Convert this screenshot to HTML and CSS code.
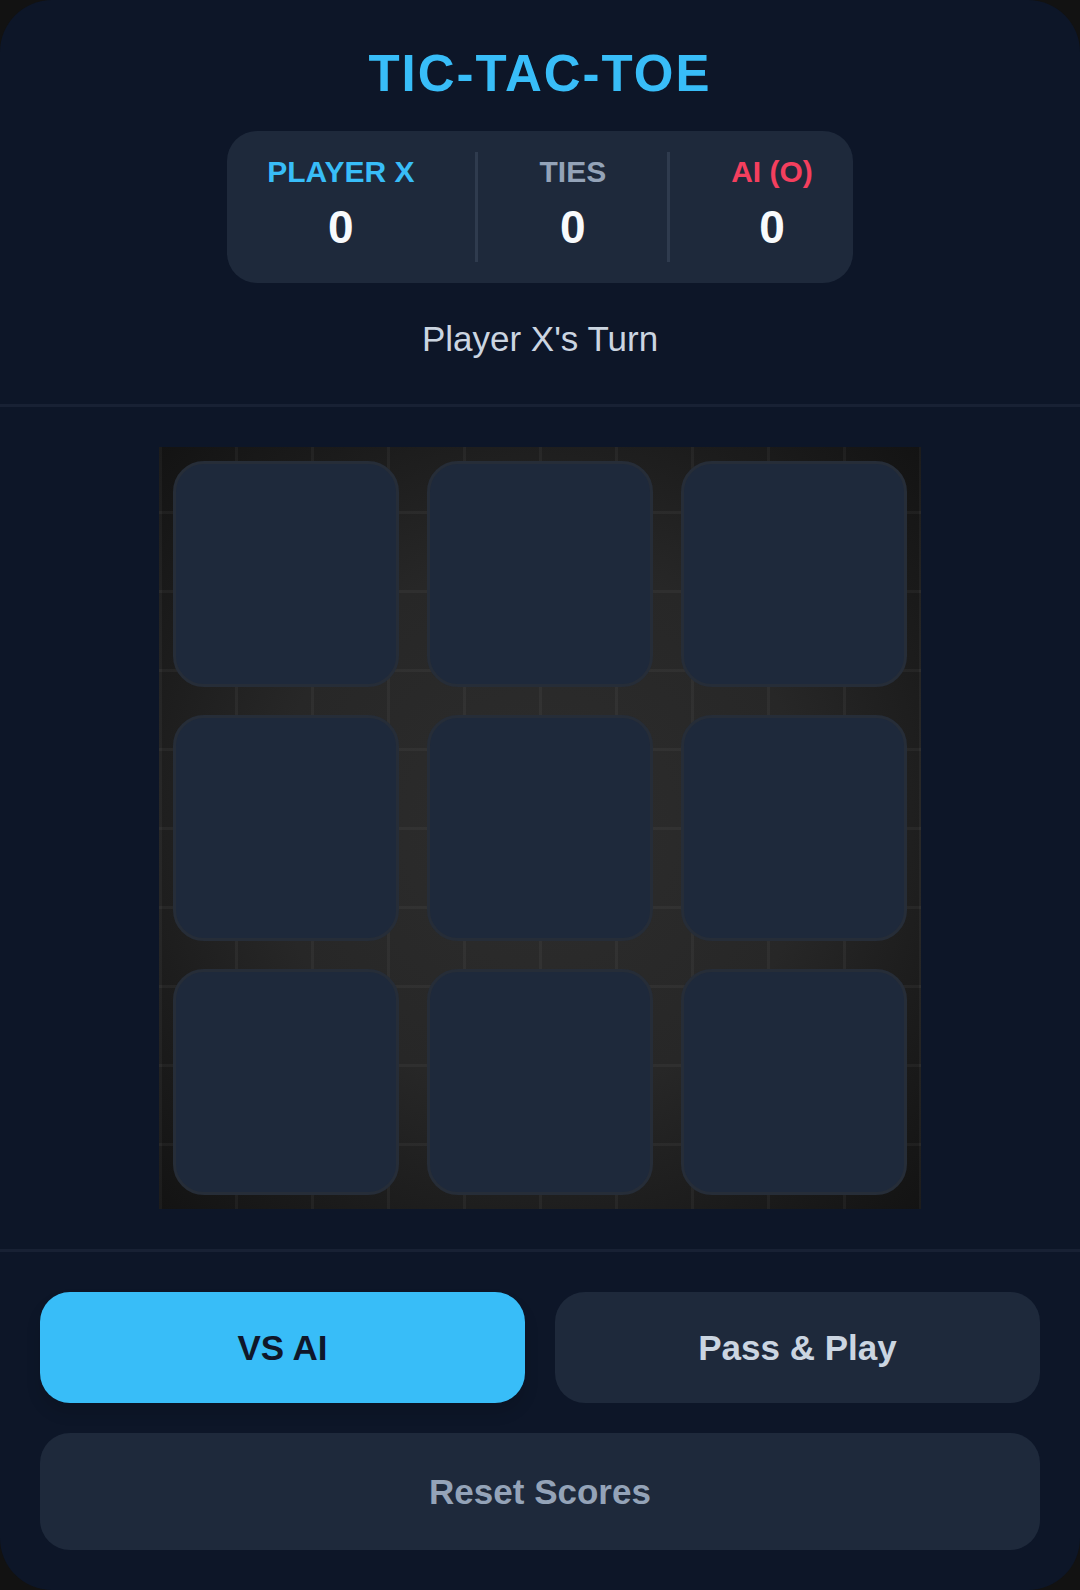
FILE: index.html
```html
<!DOCTYPE html>
<html lang="en">
<head>
  <meta charset="UTF-8">
  <meta name="viewport" content="width=device-width, initial-scale=1.0">
  <title>Tic-Tac-Toe</title>
  <link rel="stylesheet" href="styles.css">
</head>
<body>
  <div class="game">
    <header class="header">
      <h1 class="title">TIC-TAC-TOE</h1>

      <div class="scoreboard">
        <div class="score">
          <span class="score-label player-x">PLAYER X</span>
          <span class="score-value">0</span>
        </div>
        <div class="divider"></div>
        <div class="score">
          <span class="score-label ties">TIES</span>
          <span class="score-value">0</span>
        </div>
        <div class="divider"></div>
        <div class="score">
          <span class="score-label player-o">AI (O)</span>
          <span class="score-value">0</span>
        </div>
      </div>

      <p class="status">Player X's Turn</p>
    </header>

    <main class="main">
      <div class="board">
        <button type="button" class="cell" aria-label="Cell 1"></button>
        <button type="button" class="cell" aria-label="Cell 2"></button>
        <button type="button" class="cell" aria-label="Cell 3"></button>
        <button type="button" class="cell" aria-label="Cell 4"></button>
        <button type="button" class="cell" aria-label="Cell 5"></button>
        <button type="button" class="cell" aria-label="Cell 6"></button>
        <button type="button" class="cell" aria-label="Cell 7"></button>
        <button type="button" class="cell" aria-label="Cell 8"></button>
        <button type="button" class="cell" aria-label="Cell 9"></button>
      </div>
    </main>

    <footer class="controls">
      <div class="modes">
        <button type="button" class="btn active">VS AI</button>
        <button type="button" class="btn">Pass &amp; Play</button>
      </div>
      <button type="button" class="btn reset">Reset Scores</button>
    </footer>
  </div>
</body>
</html>
```

FILE: styles.css
```css
* {
  box-sizing: border-box;
}

body {
  margin: 0;
  background: #121212;
  font-family: "Liberation Sans", Arial, sans-serif;
  color: #f8fafc;
}

.game {
  display: flex;
  flex-direction: column;
  min-height: 100vh;
  background: #0d1628;
  border-radius: 52px;
  overflow: hidden;
}

.header {
  display: flex;
  flex-direction: column;
  align-items: center;
  padding: 40px;
  border-bottom: 3px solid #182134;
}

.title {
  margin: 0 0 24px;
  font-size: 51px;
  line-height: 67px;
  letter-spacing: 2px;
  color: #38bdf8;
}

.scoreboard {
  display: flex;
  gap: 61px;
  padding: 21px 40px;
  background: #1e293b;
  border-radius: 30px;
}

.score {
  display: flex;
  flex-direction: column;
  align-items: center;
  font-weight: bold;
}

.score-label {
  font-size: 30px;
  line-height: 40px;
}

.score-value {
  font-size: 46px;
  line-height: 70px;
}

.player-x {
  color: #38bdf8;
}

.ties {
  color: #94a3b8;
}

.player-o {
  color: #f43f5e;
}

.divider {
  width: 3px;
  background: #2f3b4e;
}

.status {
  margin: 31px 0 0;
  font-size: 35px;
  line-height: 50px;
  color: #cbd5e1;
}

.main {
  flex: 1;
  display: flex;
  align-items: center;
  justify-content: center;
  padding: 40px;
}

/* dark tiled wall behind the cells */
.board {
  display: grid;
  grid-template-columns: repeat(3, 1fr);
  gap: 28px;
  width: 100%;
  max-width: 762px;
  padding: 14px;
  background-color: #171717;
  background-image:
    linear-gradient(to right, rgba(255, 255, 255, 0.04) 3px, transparent 3px),
    linear-gradient(to bottom, rgba(255, 255, 255, 0.04) 3px, transparent 3px),
    radial-gradient(circle, #2d2d2d 0%, #272727 50%, #1c1c1c 76%, #131313 100%);
  background-size: 76px 100%, 100% 79px, 100% 100%;
  background-position: 0 0, 0 64px, 0 0;
}

.cell {
  aspect-ratio: 1;
  padding: 0;
  background: #1e293b;
  border: 3px solid #262d38;
  border-radius: 31px;
  cursor: pointer;
}

.controls {
  display: flex;
  flex-direction: column;
  gap: 30px;
  padding: 40px;
  border-top: 3px solid #182134;
}

.modes {
  display: grid;
  grid-template-columns: 1fr 1fr;
  gap: 30px;
}

.btn {
  padding: 30px;
  font-family: inherit;
  font-size: 35px;
  font-weight: bold;
  line-height: 51px;
  color: #cbd5e1;
  background: #1e293b;
  border: none;
  border-radius: 30px;
  cursor: pointer;
}

.btn.active {
  color: #0f172a;
  background: #38bdf8;
  box-shadow: 0 10px 15px rgba(0, 0, 0, 0.12);
}

.btn.reset {
  padding: 33px;
  color: #94a3b8;
}
```
